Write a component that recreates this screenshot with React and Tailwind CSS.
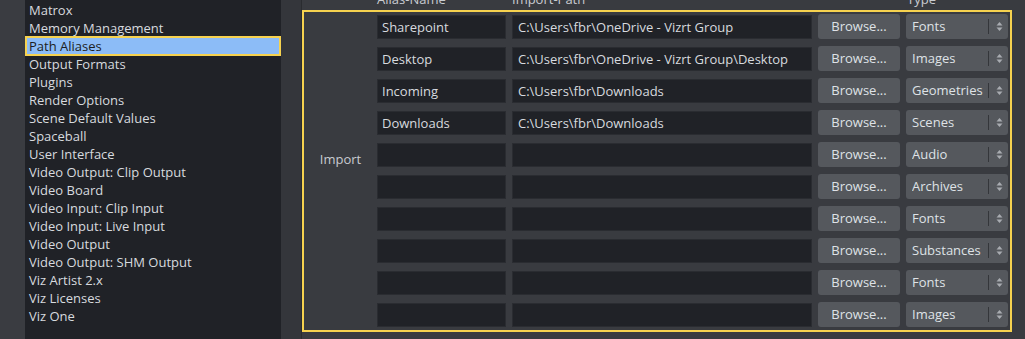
import React from "react";

const items = [
  "Matrox",
  "Memory Management",
  "Path Aliases",
  "Output Formats",
  "Plugins",
  "Render Options",
  "Scene Default Values",
  "Spaceball",
  "User Interface",
  "Video Output: Clip Output",
  "Video Board",
  "Video Input: Clip Input",
  "Video Input: Live Input",
  "Video Output",
  "Video Output: SHM Output",
  "Viz Artist 2.x",
  "Viz Licenses",
  "Viz One",
];

const rows = [
  ["Sharepoint", "C:\\Users\\fbr\\OneDrive - Vizrt Group", "Fonts"],
  ["Desktop", "C:\\Users\\fbr\\OneDrive - Vizrt Group\\Desktop", "Images"],
  ["Incoming", "C:\\Users\\fbr\\Downloads", "Geometries"],
  ["Downloads", "C:\\Users\\fbr\\Downloads", "Scenes"],
  ["", "", "Audio"],
  ["", "", "Archives"],
  ["", "", "Fonts"],
  ["", "", "Substances"],
  ["", "", "Fonts"],
  ["", "", "Images"],
];

function Arrows() {
  return (
    <svg width="7" height="11" viewBox="0 0 7 11" className="shrink-0">
      <path d="M3.5 1 L6.5 4.5 L0.5 4.5 Z" fill="#a9acb1" />
      <path d="M3.5 10 L6.5 6.5 L0.5 6.5 Z" fill="#a9acb1" />
    </svg>
  );
}

export default function App() {
  return (
    <div
      className="w-[1025px] h-[339px] flex overflow-hidden bg-[#393b40] text-[13px] text-[#d7dadf]"
      style={{ fontFamily: '"Open Sans", "Noto Sans", sans-serif' }}
    >
      <div className="w-[25px] shrink-0 bg-[#3a3c41]" />
      <div className="w-[256px] shrink-0 bg-[#202227] pt-[1px]">
        {items.map((it) => {
          const sel = it === "Path Aliases";
          return (
            <div
              key={it}
              className={
                sel
                  ? "h-[18px] leading-[18px] pl-[3px] mx-[1px] bg-[#8cbcf7] text-[#1c1e22] outline-2 outline-[#f6d24f] -outline-offset-1 relative"
                  : "h-[18px] leading-[18px] pl-[4px] whitespace-nowrap"
              }
            >
              {it}
            </div>
          );
        })}
      </div>
      <div className="w-[20px] shrink-0 bg-[#34363b]" />
      <div className="w-[1px] shrink-0 bg-[#2a2c30]" />
      <div className="flex-1 flex flex-col">
        <div className="h-[10px] relative flex text-[#c9ccd1]">
          <div className="w-[75px] shrink-0" />
          <div className="w-[135px] shrink-0 -mt-[10px] leading-[18px]">Alias-Name</div>
          <div className="w-[394px] shrink-0 -mt-[10px] leading-[18px]">Import-Path</div>
          <div className="-mt-[10px] leading-[18px] pl-[1px]">Type</div>
        </div>
        <div className="w-[710px] border-2 border-[#f6d24f] flex pt-[2px] pb-[3px] pr-[2px]">
          <div className="w-[73px] shrink-0 flex justify-center pt-[136px] leading-[18px] text-[#c8cbd0]">
            Import
          </div>
          <div className="grid grid-cols-[129px_300px_82px_102px] gap-x-[6px] gap-y-[7px]">
            {rows.map((r, i) => (
              <React.Fragment key={i}>
                <div className="h-[24px] self-center bg-[#202227] border border-[#2a2c31] pl-[4px] leading-[22px] whitespace-nowrap overflow-hidden">
                  {r[0]}
                </div>
                <div className="h-[24px] self-center bg-[#202227] border border-[#2a2c31] pl-[5px] leading-[22px] whitespace-nowrap overflow-hidden">
                  {r[1]}
                </div>
                <div className="h-[25px] bg-[#55585d] rounded-[3px] flex items-center justify-center pt-[1px] text-[#dfe2e6]">
                  Browse...
                </div>
                <div className="h-[25px] bg-[#55585d] rounded-[3px] flex items-center pl-[6px] text-[#dfe2e6]">
                  <div className="w-[76px] shrink-0 whitespace-nowrap overflow-hidden pt-[1px]">{r[2]}</div>
                  <div className="w-[1px] h-[15px] bg-[#34363a] shrink-0" />
                  <div className="flex-1 flex justify-center pl-[2px]">
                    <Arrows />
                  </div>
                </div>
              </React.Fragment>
            ))}
          </div>
        </div>
      </div>
    </div>
  );
}
